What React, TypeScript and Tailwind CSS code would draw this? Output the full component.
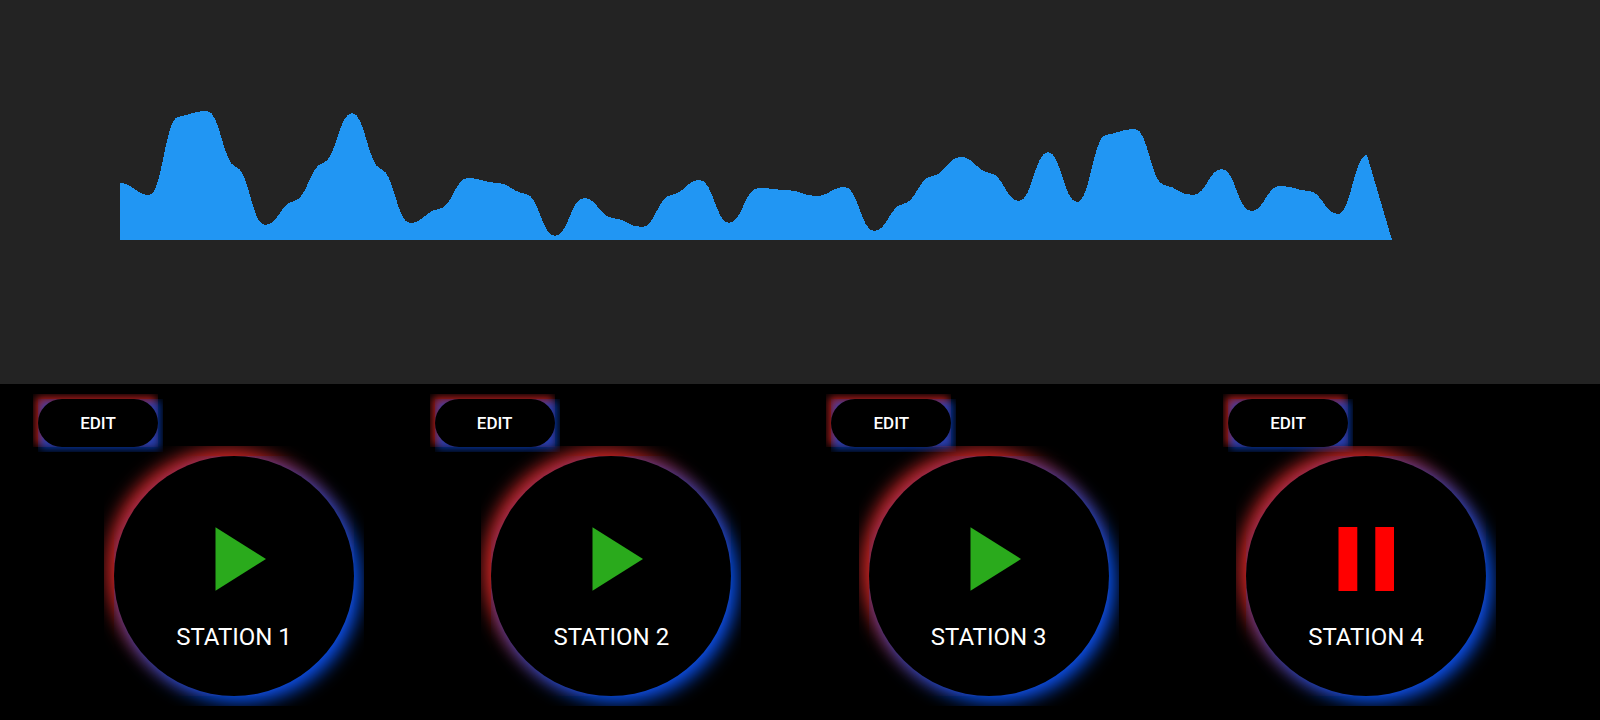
import { useState } from "react";

const BASELINE = 240;
const STEP = 29;
const LEFT = 120;

const levels = [
  57, 45, 123, 129, 73, 15, 39, 77, 127, 71, 17, 31, 62, 57, 46, 4, 42, 22, 13,
  45, 60, 17, 52, 50, 44, 53, 9, 36, 64, 83, 67, 39, 88, 38, 105, 111, 55, 45,
  71, 29, 54, 49, 26, 85,
];

// Tangents are kept shallow so the curve rests on a shelf at every sample.
function wavePath(values: number[]): string {
  const slope = (i: number) => {
    if (i === 0 || i === values.length - 1) return 0;
    const before = values[i] - values[i - 1];
    const after = values[i + 1] - values[i];
    if (before * after <= 0) return 0;
    return (-0.12 * (before + after)) / (2 * STEP);
  };
  const handle = STEP * 0.45;
  let d = `M${LEFT} ${BASELINE}V${BASELINE - values[0]}`;
  for (let i = 1; i < values.length; i++) {
    const x0 = LEFT + (i - 1) * STEP;
    const x1 = LEFT + i * STEP;
    const y0 = BASELINE - values[i - 1];
    const y1 = BASELINE - values[i];
    d += `C${x0 + handle} ${y0 + slope(i - 1) * handle} ${x1 - handle} ${
      y1 - slope(i) * handle
    } ${x1} ${y1}`;
  }
  return `${d}L${LEFT + (values.length - 1) * STEP + 25} ${BASELINE}Z`;
}

function Waveform() {
  return (
    <section aria-label="Audio level" className="h-96 w-full bg-[#232323]">
      <svg
        viewBox="0 0 1600 384"
        preserveAspectRatio="none"
        className="block h-full w-full"
        aria-hidden="true"
      >
        <path d={wavePath(levels)} fill="#2196f3" shapeRendering="crispEdges" />
      </svg>
    </section>
  );
}

// The two glows and the button share one grid cell; each glow is clipped to its own box.
function EditButton({ station }: { station: string }) {
  return (
    <div className="grid h-12 w-[120px] shrink-0">
      <div className="col-start-1 row-start-1 -mt-[5px] -ml-[5px] overflow-hidden pt-[3px] pr-[2px] pb-[2px] pl-[3px]">
        <div className="h-full bg-[#be2020] blur-[4px]" />
      </div>
      <div className="col-start-1 row-start-1 -mr-[5px] -mb-[5px] overflow-hidden pt-[2px] pr-[3px] pb-[3px] pl-[2px]">
        <div className="h-full bg-[#0a46d2]/80 blur-[4px]" />
      </div>
      <button
        type="button"
        aria-label={`Edit ${station}`}
        className="z-10 col-start-1 row-start-1 cursor-pointer rounded-full bg-black text-[17px] leading-6 font-medium text-white"
      >
        EDIT
      </button>
    </div>
  );
}

function StationButton({
  name,
  playing,
  onToggle,
}: {
  name: string;
  playing: boolean;
  onToggle: () => void;
}) {
  return (
    <div className="grid size-60 shrink-0">
      <div className="col-start-1 row-start-1 -mt-[10px] -ml-[10px] overflow-hidden pt-[3px] pr-[7px] pb-[7px] pl-[3px]">
        <div className="h-full rounded-full bg-[#d22626] blur-[9px]" />
      </div>
      <div className="col-start-1 row-start-1 -mr-[10px] -mb-[10px] overflow-hidden pt-[6px] pr-[4px] pb-[4px] pl-[6px]">
        <div className="h-full rounded-full bg-[#0854f6] blur-[9px]" />
      </div>
      <button
        type="button"
        aria-pressed={playing}
        onClick={onToggle}
        className="z-10 col-start-1 row-start-1 flex cursor-pointer flex-col items-center justify-center gap-[30px] rounded-full bg-black pt-7 text-2xl leading-8 text-white"
      >
        <svg viewBox="0 0 64 64" className="size-16 shrink-0" aria-hidden="true">
          {playing ? (
            <path d="M4.5 0H23.3V64H4.5ZM41.3 0H60V64H41.3Z" fill="#ff0000" />
          ) : (
            <path d="M13.5 0.3L64 32L13.5 63.7Z" fill="#2aaa1c" />
          )}
        </svg>
        {name}
      </button>
    </div>
  );
}

const stations = ["STATION 1", "STATION 2", "STATION 3", "STATION 4"];

export default function App() {
  const [active, setActive] = useState<string | null>("STATION 4");

  return (
    <main className="min-h-screen overflow-hidden bg-black font-['Roboto',sans-serif]">
      <Waveform />
      <section aria-label="Stations" className="flex flex-col gap-[9px] pt-[15px] pb-6">
        <div className="flex justify-between pr-[252px] pl-[38px]">
          {stations.map((name) => (
            <EditButton key={name} station={name} />
          ))}
        </div>
        <div className="flex justify-between px-[114px]">
          {stations.map((name) => (
            <StationButton
              key={name}
              name={name}
              playing={active === name}
              onToggle={() => setActive(active === name ? null : name)}
            />
          ))}
        </div>
      </section>
    </main>
  );
}
